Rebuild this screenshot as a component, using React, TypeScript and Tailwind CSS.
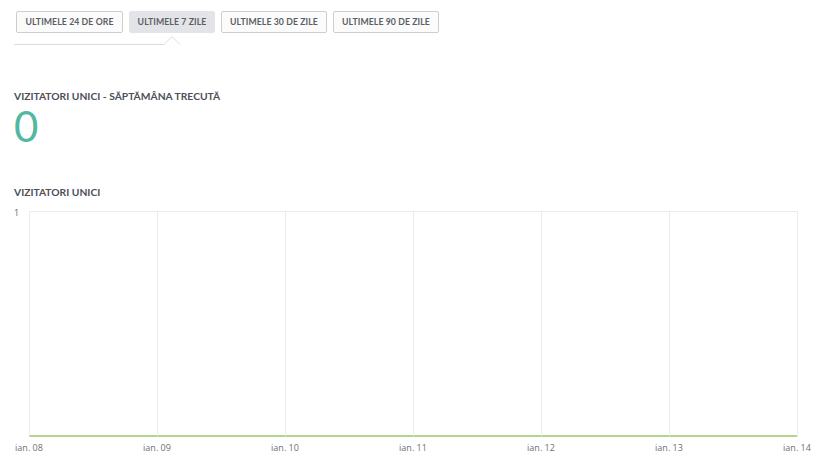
const ranges = [
  { label: "Ultimele 24 de ore", w: "w-[107px]" },
  { label: "Ultimele 7 zile", w: "w-[86px]", active: true },
  { label: "Ultimele 30 de zile", w: "w-[106px]" },
  { label: "Ultimele 90 de zile", w: "w-[106px]" },
];

const days = ["ian. 08", "ian. 09", "ian. 10", "ian. 11", "ian. 12", "ian. 13", "ian. 14"];

export default function App() {
  return (
    <div className="w-[830px] h-[460px] bg-white overflow-hidden font-['Lato','Open_Sans',sans-serif]">
      {/* range picker */}
      <div className="flex gap-[6px] pl-[16px] pt-[11px]">
        {ranges.map((r) => (
          <button
            key={r.label}
            className={`${r.w} h-[22px] rounded-[2px] border text-[8.7px] font-bold uppercase tracking-[0.1px] text-[#5a5e64] ${
              r.active ? "bg-[#e3e4e7] border-[#e3e4e7]" : "bg-[#fbfbfb] border-[#cdcdcd]"
            }`}
          >
            {r.label}
          </button>
        ))}
      </div>
      <svg width="170" height="10" className="ml-[14px] mt-[3px] block">
        <polyline points="0,8.5 150,8.5 158,0.5 166,8.5" fill="none" stroke="#dcdcdc" strokeWidth="1" />
      </svg>

      {/* last week */}
      <div className="pl-[14px] mt-[44px]">
        <div className="text-[10.3px] leading-[12px] font-bold uppercase text-[#4b4f57]">
          Vizitatori unici - Săptămâna trecută
        </div>
        <div className="mt-[3px] text-[42px] leading-[42px] font-normal text-[#52b8a1]">0</div>
        <div className="mt-[39px] text-[10.3px] leading-[12px] font-bold uppercase text-[#4b4f57]">
          Vizitatori unici
        </div>
      </div>

      {/* chart */}
      <div className="flex mt-[13px] pl-[14px]">
        <div className="w-[15px] -mt-[4px] text-[9px] leading-[12px] text-[#666] font-['Open_Sans',sans-serif]">1</div>
        <div className="grid grid-cols-[repeat(6,128px)] h-[226px] border-t border-[#ececec] border-r border-r-[#ececec]">
          {days.slice(0, 6).map((d) => (
            <div key={d} className="border-l border-[#ececec] border-b-2 border-b-[#b3d58c]" />
          ))}
        </div>
      </div>
      <div className="grid grid-cols-[repeat(7,128px)] -ml-[35px] mt-[5px]">
        {days.map((d) => (
          <div key={d} className="text-center text-[9px] leading-[12px] text-[#6f6f6f] font-['Open_Sans',sans-serif]">
            {d}
          </div>
        ))}
      </div>
    </div>
  );
}
